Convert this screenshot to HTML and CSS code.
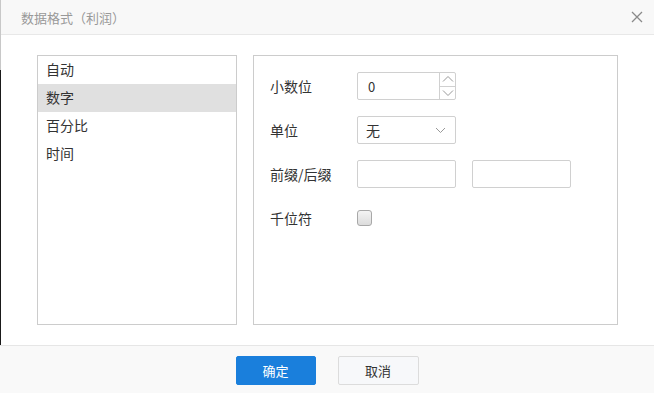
FILE: index.html
```html
<!DOCTYPE html>
<html lang="zh">
<head>
    <meta charset="UTF-8">
    <title>数据格式</title>
    <link rel="stylesheet" href="styles.css">
</head>
<body>
    <div class="dialog">
        <!-- Заголовок -->
        <div class="dlg-header">
            <span class="dlg-title">数据格式（利润）</span>
            <span class="dlg-close">
                <svg width="12" height="12" viewBox="0 0 12 12"><path d="M1 1L11 11M11 1L1 11" stroke="#8a8a8a" stroke-width="1.3" fill="none"/></svg>
            </span>
        </div>

        <!-- Содержимое -->
        <div class="dlg-body">
            <ul class="type-list">
                <li>自动</li>
                <li class="active">数字</li>
                <li>百分比</li>
                <li>时间</li>
            </ul>

            <div class="form-panel">
                <div class="form-row">
                    <label>小数位</label>
                    <div class="spin">
                        <span class="spin-value">0</span>
                        <div class="spin-btns">
                            <span><svg width="12" height="8" viewBox="0 0 12 8"><path d="M1 6.5L6 1.5L11 6.5" stroke="#999" fill="none"/></svg></span>
                            <span><svg width="12" height="8" viewBox="0 0 12 8"><path d="M1 1.5L6 6.5L11 1.5" stroke="#999" fill="none"/></svg></span>
                        </div>
                    </div>
                </div>
                <div class="form-row">
                    <label>单位</label>
                    <div class="select">
                        <span>无</span>
                        <svg width="11" height="7" viewBox="0 0 11 7"><path d="M1 1L5.5 5.5L10 1" stroke="#999" fill="none"/></svg>
                    </div>
                </div>
                <div class="form-row">
                    <label>前缀/后缀</label>
                    <div class="text-input"></div>
                    <div class="text-input"></div>
                </div>
                <div class="form-row">
                    <label>千位符</label>
                    <span class="checkbox"></span>
                </div>
            </div>
        </div>

        <!-- Кнопки -->
        <div class="dlg-footer">
            <button class="btn btn-primary">确定</button>
            <button class="btn">取消</button>
        </div>
    </div>
</body>
</html>
```

FILE: styles.css
```css
body {
    margin: 0;
    font-family: "Noto Sans CJK SC", "Liberation Sans", sans-serif;
    background-color: #fff;
    color: #333;
}

.dialog {
    position: relative;
    width: 654px;
    height: 393px;
    display: flex;
    flex-direction: column;
    background-color: #fff;
}

/* край окна позади диалога */
.dialog::before {
    content: "";
    position: absolute;
    left: 0;
    top: 0;
    width: 1px;
    height: 345px;
    background: linear-gradient(#c8c8c8 0 70px, #1a1a1a 70px);
}

.dlg-header {
    height: 34px;
    display: flex;
    align-items: center;
    justify-content: space-between;
    padding: 0 11px 0 21px;
    background-color: #f8f8f8;
    border-bottom: 1px solid #e8e8e8;
}

.dlg-title {
    font-size: 13px;
    color: #999;
}

.dlg-close {
    display: flex;
    width: 12px;
    height: 12px;
}

.dlg-body {
    display: flex;
    gap: 16px;
    padding: 20px 36px 20px 37px;
    height: 270px;
}

.type-list {
    list-style: none;
    margin: 0;
    padding: 0;
    width: 198px;
    border: 1px solid #ccc;
}

.type-list li {
    height: 28px;
    line-height: 26px;
    padding-left: 8px;
    font-size: 14px;
    color: #333;
}

.type-list li.active {
    background-color: #e0e0e0;
}

.form-panel {
    flex: 1;
    border: 1px solid #ccc;
    padding: 16px 16px;
    display: flex;
    flex-direction: column;
    gap: 16px;
}

.form-row {
    display: flex;
    align-items: center;
    gap: 16px;
    height: 28px;
}

.form-row label {
    width: 71px;
    font-size: 14px;
    color: #333;
    padding-bottom: 1px;
}

.spin,
.select,
.text-input {
    box-sizing: border-box;
    width: 99px;
    height: 28px;
    border: 1px solid #d0d0d0;
    border-radius: 2px;
    background-color: #fff;
    font-size: 13px;
    color: #333;
}

.spin {
    display: flex;
    align-items: center;
}

.spin-value {
    flex: 1;
    padding-left: 10px;
}

.spin-btns {
    width: 15px;
    height: 100%;
    border-left: 1px solid #d0d0d0;
    display: flex;
    flex-direction: column;
}

.spin-btns span {
    flex: 1;
    display: flex;
    align-items: center;
    justify-content: center;
}

.spin-btns span + span {
    border-top: 1px solid #d0d0d0;
}

.select {
    display: flex;
    align-items: center;
    justify-content: space-between;
    padding: 0 9px 0 8px;
    font-size: 14px;
}

.checkbox {
    box-sizing: border-box;
    width: 15px;
    height: 16px;
    border: 1px solid #a8a8a8;
    border-radius: 3px;
    background: linear-gradient(#f4f4f4, #dcdcdc);
}

.dlg-footer {
    flex: 1;
    display: flex;
    justify-content: center;
    gap: 22px;
    padding-top: 10px;
    background-color: #f9f9f9;
    border-top: 1px solid #e6e6e6;
}

.btn {
    width: 81px;
    height: 29px;
    font-family: inherit;
    font-size: 13px;
    color: #333;
    background-color: #f7f8fa;
    border: 1px solid #dcdcdc;
    border-radius: 2px;
    cursor: pointer;
}

.btn-primary {
    width: 80px;
    color: #fff;
    background-color: #1a7fdc;
    border-color: #1a7fdc;
}
```
